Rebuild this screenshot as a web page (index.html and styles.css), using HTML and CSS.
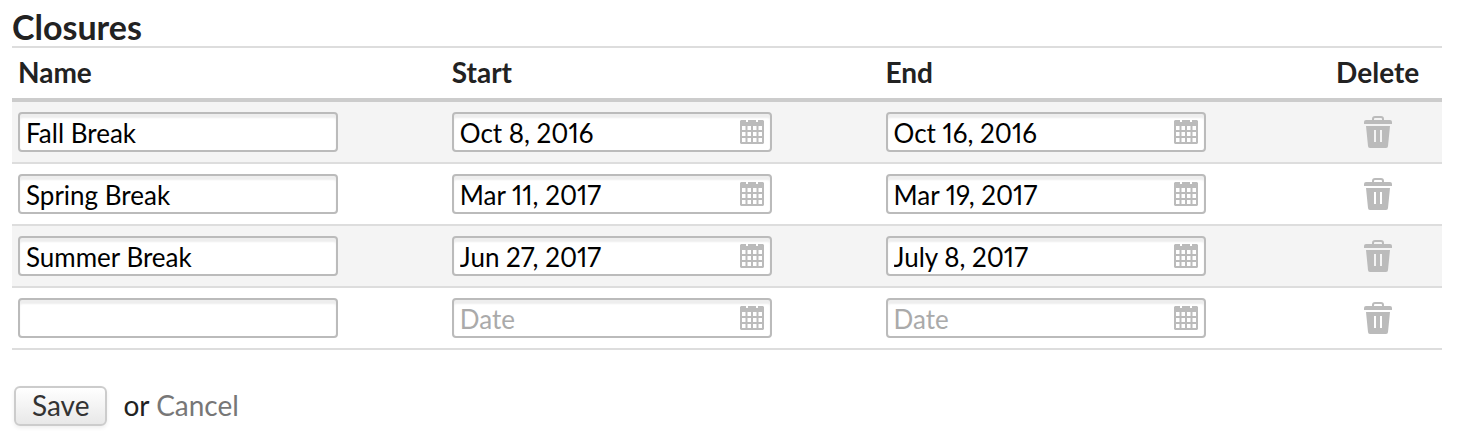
FILE: index.html
```
<!DOCTYPE html>
<html lang="en">
<head>
    <meta charset="UTF-8">
    <meta name="viewport" content="width=device-width, initial-scale=1.0">
    <title>Closures</title>
    <link rel="stylesheet" href="styles.css">
</head>
<body>
    <svg class="sprite" aria-hidden="true">
        <symbol id="calendar" viewBox="0 0 24 24">
            <path fill-rule="evenodd" d="M1 0H6V2H8V0H16V2H18V0H23L24 1V23L23 24H1L0 23V1ZM2 6V10H5.5V6ZM7.5 6V10H11V6ZM13 6V10H16.5V6ZM18.5 6V10H22V6ZM2 12V16H5.5V12ZM7.5 12V16H11V12ZM13 12V16H16.5V12ZM18.5 12V16H22V12ZM2 18V22H5.5V18ZM7.5 18V22H11V18ZM13 18V22H16.5V18ZM18.5 18V22H22V18Z"/>
        </symbol>
        <symbol id="trash" viewBox="0 0 28 32">
            <path fill-rule="evenodd" d="M8 4V3Q8 0 11 0H17Q20 0 20 3V4H26Q28 4 28 6V8H0V6Q0 4 2 4ZM10 4H18V3Q18 2 17 2H11Q10 2 10 3ZM2 10H26L24 30Q24 32 22 32H6Q4 32 4 30ZM10 14V26H12V14ZM16 14V26H18V14Z"/>
        </symbol>
    </svg>
    <form class="closures">
        <h1>Closures</h1>
        <table>
            <thead>
                <tr>
                    <th>Name</th>
                    <th>Start</th>
                    <th>End</th>
                    <th class="delete">Delete</th>
                </tr>
            </thead>
            <tbody>
                <tr>
                    <td><input type="text" aria-label="Name" value="Fall Break"></td>
                    <td><div class="date"><input type="text" aria-label="Start" placeholder="Date" value="Oct 8, 2016"><svg><use href="#calendar"/></svg></div></td>
                    <td><div class="date"><input type="text" aria-label="End" placeholder="Date" value="Oct 16, 2016"><svg><use href="#calendar"/></svg></div></td>
                    <td class="delete"><button type="button" class="trash" aria-label="Delete"><svg><use href="#trash"/></svg></button></td>
                </tr>
                <tr>
                    <td><input type="text" aria-label="Name" value="Spring Break"></td>
                    <td><div class="date"><input type="text" aria-label="Start" placeholder="Date" value="Mar 11, 2017"><svg><use href="#calendar"/></svg></div></td>
                    <td><div class="date"><input type="text" aria-label="End" placeholder="Date" value="Mar 19, 2017"><svg><use href="#calendar"/></svg></div></td>
                    <td class="delete"><button type="button" class="trash" aria-label="Delete"><svg><use href="#trash"/></svg></button></td>
                </tr>
                <tr>
                    <td><input type="text" aria-label="Name" value="Summer Break"></td>
                    <td><div class="date"><input type="text" aria-label="Start" placeholder="Date" value="Jun 27, 2017"><svg><use href="#calendar"/></svg></div></td>
                    <td><div class="date"><input type="text" aria-label="End" placeholder="Date" value="July 8, 2017"><svg><use href="#calendar"/></svg></div></td>
                    <td class="delete"><button type="button" class="trash" aria-label="Delete"><svg><use href="#trash"/></svg></button></td>
                </tr>
                <tr>
                    <td><input type="text" aria-label="Name"></td>
                    <td><div class="date"><input type="text" aria-label="Start" placeholder="Date"><svg><use href="#calendar"/></svg></div></td>
                    <td><div class="date"><input type="text" aria-label="End" placeholder="Date"><svg><use href="#calendar"/></svg></div></td>
                    <td class="delete"><button type="button" class="trash" aria-label="Delete"><svg><use href="#trash"/></svg></button></td>
                </tr>
            </tbody>
        </table>
        <div class="actions">
            <button type="submit" class="save">Save</button>
            <span>or <a href="#">Cancel</a></span>
        </div>
    </form>
</body>
</html>
```
FILE: styles.css
```
* {
    box-sizing: border-box;
}
body {
    margin: 0;
    background: #ffffff;
    color: #222222;
    font-family: Lato, sans-serif;
    font-size: 28px;
    line-height: 32px;
}
.sprite {
    display: none;
}
.closures {
    padding: 8px 18px 20px 12px;
}
h1 {
    margin: 0;
    font-size: 34px;
    line-height: 38px;
}
table {
    width: 100%;
    table-layout: fixed;
    border-spacing: 0;
    border-top: 2px solid #dddddd;
}
th {
    padding: 8px 6px 10px;
    border-bottom: 4px solid #cccccc;
    text-align: left;
}
td {
    padding: 10px 6px;
    border-bottom: 2px solid #dddddd;
}
tbody tr:nth-child(odd) {
    background: #f4f4f4;
}
th.delete {
    width: 9%;
}
.delete {
    text-align: center;
}
input {
    display: block;
    width: 320px;
    max-width: 100%;
    height: 40px;
    padding: 2px 6px 0;
    border: 2px solid #bbbbbb;
    border-radius: 4px;
    background: #ffffff;
    box-shadow: inset 0 4px 2px #eeeeee;
    color: #000000;
    font: inherit;
    font-size: 26px;
    font-variant-numeric: proportional-nums;
}
input::placeholder {
    color: #aaaaaa;
}
.date {
    position: relative;
    width: 320px;
    max-width: 100%;
}
.date input {
    padding-right: 40px;
}
.date svg {
    position: absolute;
    top: 8px;
    right: 8px;
    width: 24px;
    height: 24px;
    fill: #bbbbbb;
}
button {
    font: inherit;
    cursor: pointer;
}
.trash {
    display: block;
    margin: 0 auto;
    padding: 0;
    border: none;
    background: none;
}
.trash svg {
    display: block;
    width: 28px;
    height: 32px;
    fill: #bbbbbb;
}
.actions {
    display: flex;
    align-items: center;
    gap: 16px;
    margin-top: 36px;
    padding-left: 2px;
}
.actions span {
    padding-bottom: 2px;
}
.save {
    height: 40px;
    padding: 0 16px 2px;
    border: 2px solid #cccccc;
    border-radius: 6px;
    background: linear-gradient(#ffffff, #e8e8e8);
    box-shadow: 0 2px 4px #eeeeee;
    color: #333333;
}
a {
    color: #777777;
    text-decoration: none;
}
```
